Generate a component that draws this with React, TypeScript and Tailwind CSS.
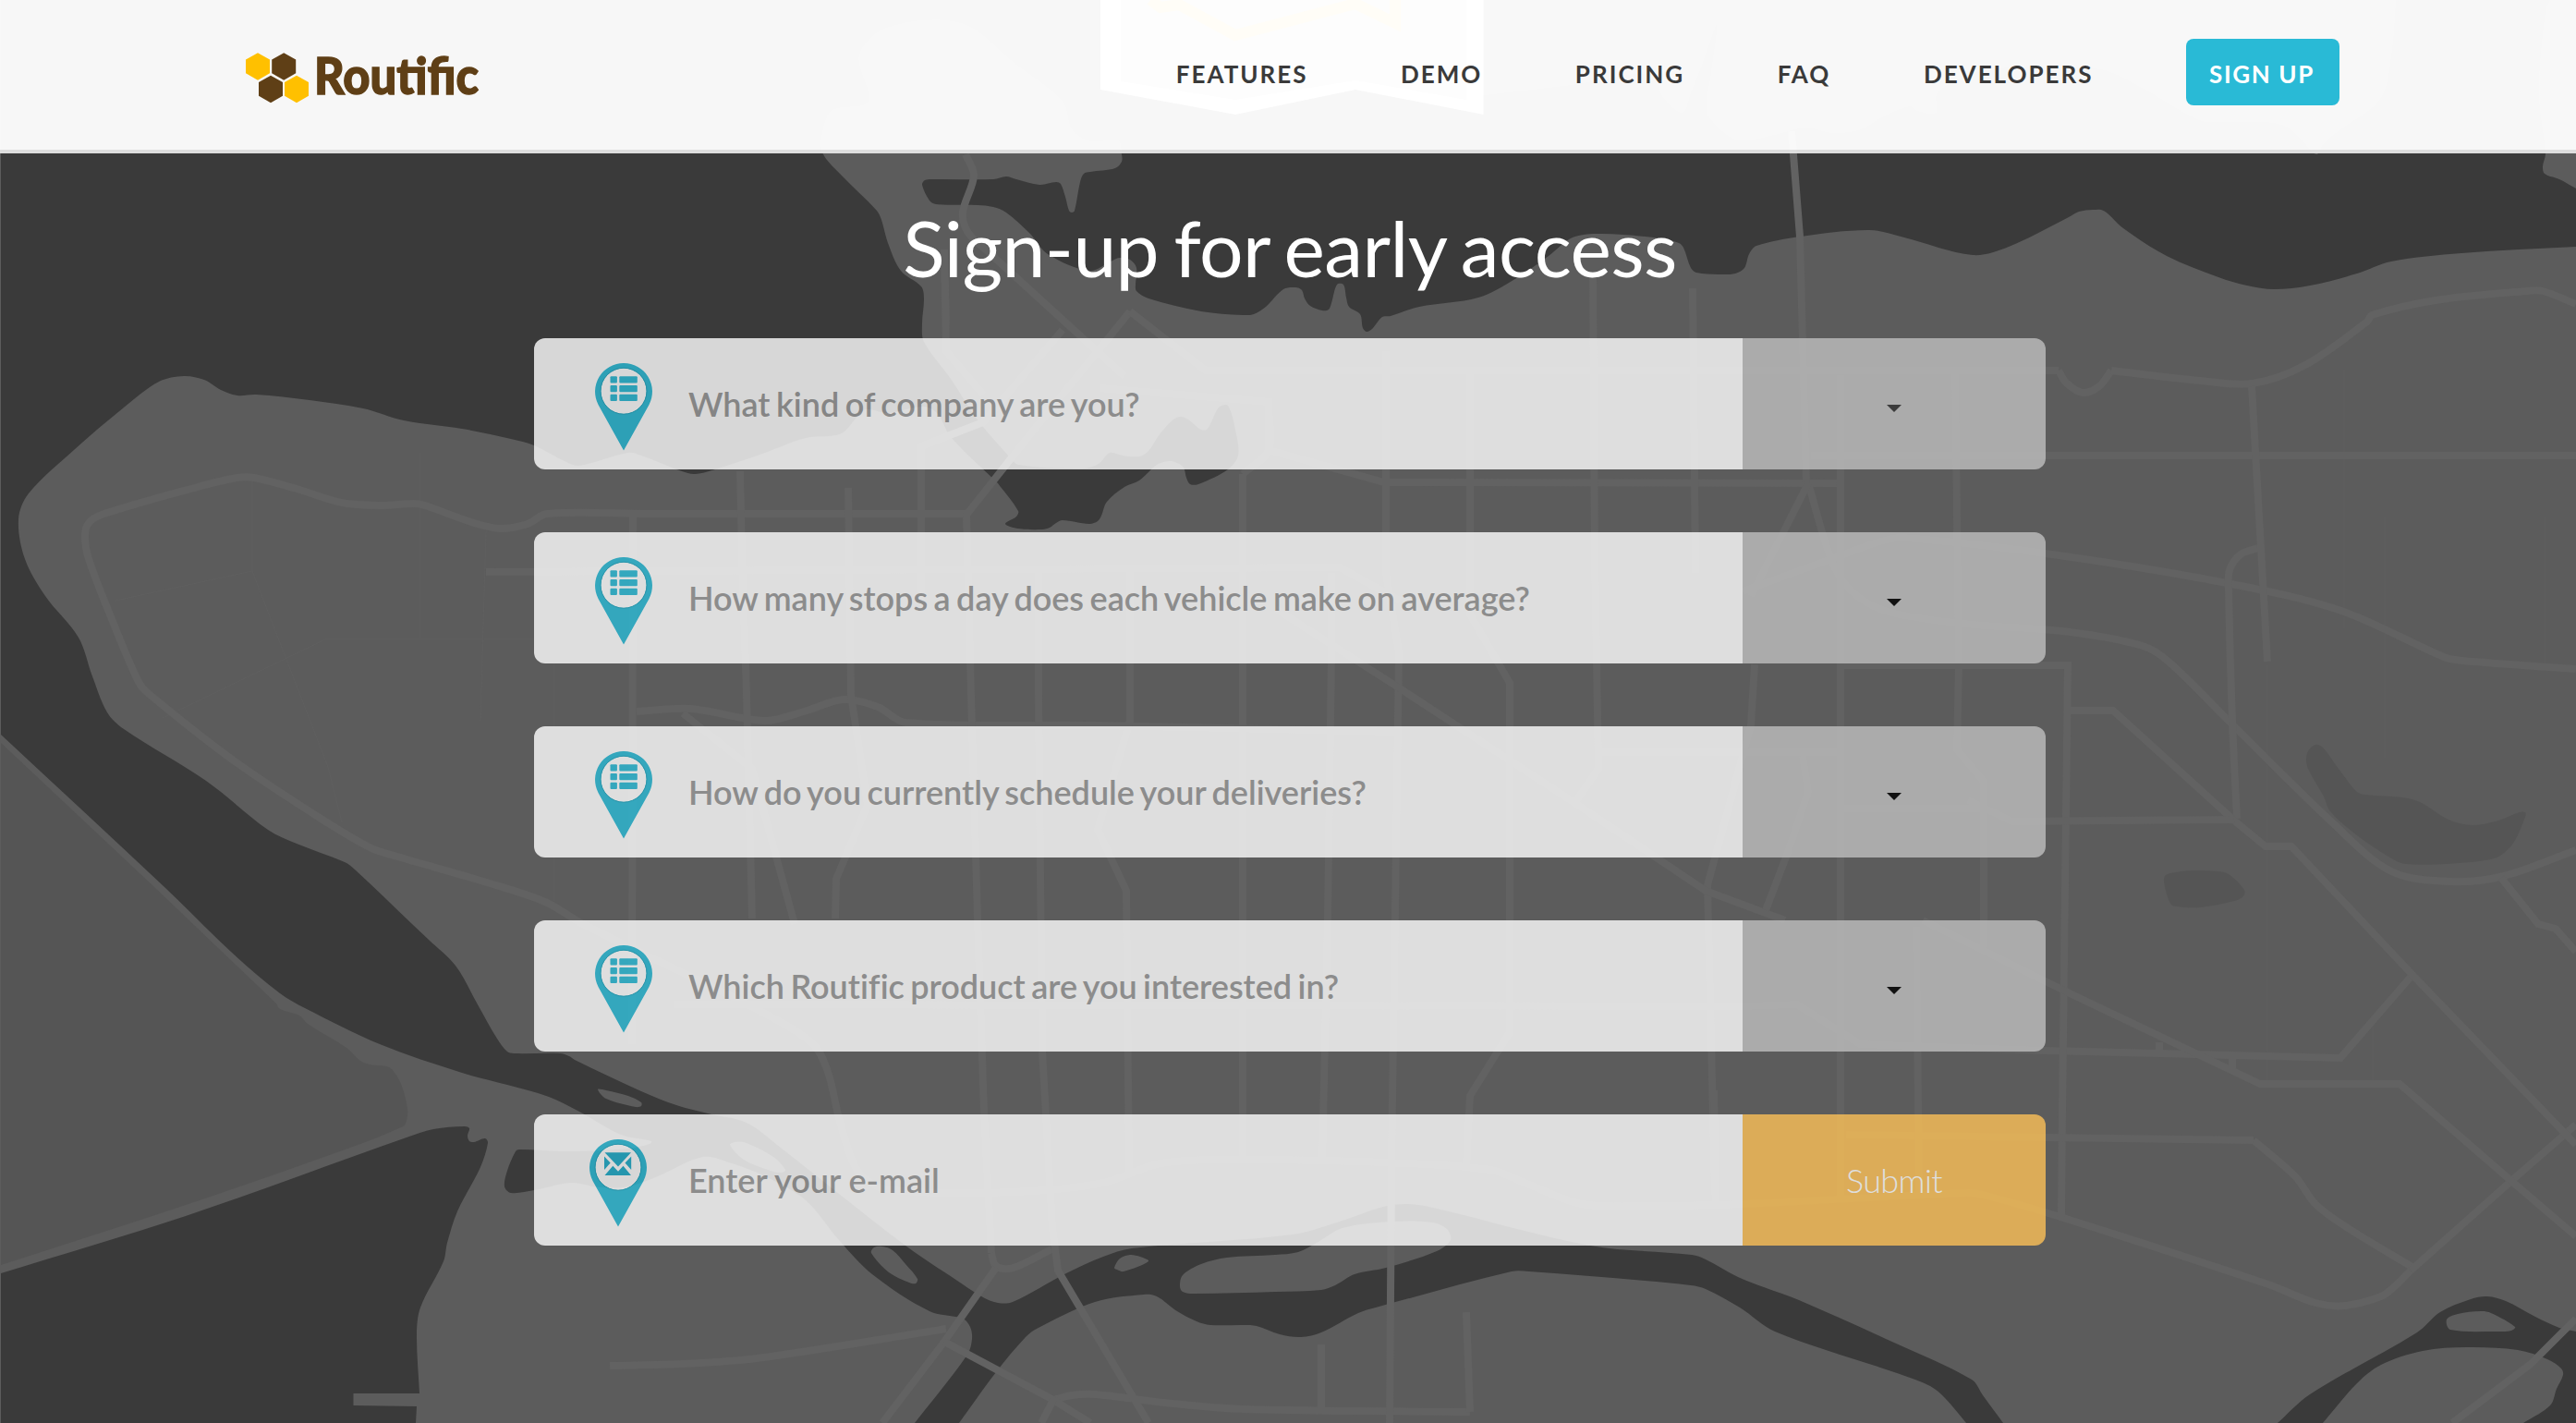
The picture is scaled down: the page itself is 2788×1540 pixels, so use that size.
import React from "react";

type Pt = [number, number];

const parse = (s: string): Pt[] =>
  s
    .trim()
    .split(/\s+/)
    .map((p) => p.split(",").map(Number) as Pt);

// Turns a list of points into a soft curve (Catmull-Rom converted to cubic Béziers).
function smooth(s: string, closed = false): string {
  const p = parse(s);
  const n = p.length;
  const at = (i: number): Pt =>
    closed ? p[(i + n) % n] : p[Math.max(0, Math.min(n - 1, i))];
  const dist = (a: Pt, b: Pt) => Math.hypot(a[0] - b[0], a[1] - b[1]) || 1;
  let d = `M${p[0][0]},${p[0][1]}`;
  const last = closed ? n : n - 1;
  for (let i = 0; i < last; i++) {
    const a = at(i - 1);
    const b = at(i);
    const c = at(i + 1);
    const e = at(i + 2);
    const len = dist(b, c);
    const k1 = (0.33 * len) / (dist(a, b) + len);
    const k2 = (0.33 * len) / (dist(c, e) + len);
    d += `C${(b[0] + (c[0] - a[0]) * k1).toFixed(1)},${(b[1] + (c[1] - a[1]) * k1).toFixed(1)} ${(c[0] - (e[0] - b[0]) * k2).toFixed(1)},${(c[1] - (e[1] - b[1]) * k2).toFixed(1)} ${c[0]},${c[1]}`;
  }
  return closed ? d + "Z" : d;
}

const sharp = (s: string) => "M" + s.trim().split(/\s+/).join("L");

// Continues an existing path instead of starting a new one.
const join = (...parts: string[]) =>
  parts.map((d, i) => (i === 0 ? d : d.replace(/^M/, "L"))).join("") + "Z";

const northShore = smooth(
  "1606,103 1700,92 1787,80 1800,105 1821,122 1830,100 1842,70 1858,27 1852,80 1847,120 1860,138 1876,150 1890,152 1920,146 1955,138 1984,144 2014,140 2040,125 2067,115 2076,120 2095,122 2097,100 2140,78 2200,72 2274,75 2322,97 2381,130 2415,132 2452,132 2475,137 2490,150 2507,167 2515,155 2529,143 2576,107 2588,60 2593,0"
);
const eastHeader = smooth(
  "2760,0 2755,13 2748,100 2755,166 2752,180 2754,188 2770,194 2788,204"
);
const harbour = smooth(
  "2788,267 2664,274 2588,283 2551,296 2500,309 2461,313 2432,309 2401,300 2345,277 2298,247 2281,231 2274,227 2265,227 2250,229 2239,235 2174,267 2135,276 2061,257 2023,249 1949,256 1901,266 1893,275 1888,290 1878,296 1860,297 1836,295 1830,290 1822,268 1817,263 1797,258 1734,253 1702,257 1676,277 1638,303 1600,322 1536,332 1505,342 1496,343 1485,356 1479,359 1475,355 1472,340 1460,332 1457,322 1454,308 1447,308 1441,328 1438,335 1431,336 1418,331 1412,323 1409,314 1402,311 1389,313 1370,332 1357,340 1345,341 1300,337 1243,323 1230,315 1229,308 1230,290 1223,281 1212,279 1204,282 1179,293 1134,275 1115,253 1089,230 1075,224 1058,222 1013,221 1006,217 998,200 1001,195 1010,194 1075,194 1089,191 1100,194 1125,200 1143,197 1148,199 1153,213 1157,228 1160,230 1163,228 1169,197 1173,188 1180,186 1207,182 1214,175 1214,167 1210,152 1180,153 1160,140 1150,110 1100,70 1040,25 960,30 930,60 940,110 900,120 889,150 891,167 911,190 949,228 954,238 961,263 975,293 997,310 1000,323 998,350 1000,370 1029,410 1060,457 1093,495"
);
const falseCreek = smooth(
  "1093,495 1102,503 1172,507 1189,502 1201,490 1215,493 1233,494 1243,488 1255,470 1270,454 1278,451 1286,454 1300,465 1307,464 1319,441 1329,439 1338,470 1340,493 1329,508 1297,524 1288,524 1284,517 1281,506 1274,501 1265,499 1252,503 1233,520 1217,527 1198,543 1192,558 1188,564 1179,567 1150,563 1143,566 1136,571 1128,573 1102,572 1088,567 1100,559 1102,553 1080,523"
);
const kitsToPoint = smooth(
  "1080,523 1029,473 1015,448 1000,440 960,447 937,443 926,453 915,466 905,471 872,474 828,490 774,508 752,513 738,510 694,493 680,490 627,504 613,500 578,482 553,475 500,464 437,455 393,442 335,433 277,427 257,428 239,422 221,411 199,407 172,413 134,441 80,487 31,534 20,562 27,605 49,645 85,690 100,732 116,771 134,789 223,845 290,898 321,913 373,933 384,941 446,1000 464,1017 493,1045 518,1089 538,1124 549,1138 556,1140 606,1140 616,1143 622,1147 694,1181 732,1196 770,1206 808,1215 846,1243 908,1292 980,1348 1042,1390 1064,1404 1080,1410 1096,1409 1154,1378 1194,1360 1225,1351 1399,1336 1450,1322 1497,1306 1524,1303 1551,1307 1721,1348 1831,1358 1846,1363 1881,1382 1909,1393 1947,1407 2050,1453 2134,1493 2146,1510 2168,1540"
);
const southArm = smooth(
  "2128,1540 2105,1513 2089,1500 2056,1487 1921,1441 1883,1415 1846,1395 1830,1391 1780,1386 1655,1376 1636,1376 1489,1415 1470,1421 1430,1442 1408,1447 1385,1444 1360,1435 1346,1434 1310,1434 1295,1430 1274,1419 1252,1403 1238,1401 1185,1409 1122,1438 1110,1447 1078,1485 1038,1540"
);
const westArm = smooth(
  "990,1540 1047,1466 1052,1449 1050,1436 1042,1427 1006,1419 944,1379 908,1342 872,1299 828,1273 792,1259 761,1252 712,1273 680,1284 649,1285 618,1280 578,1288 553,1291 546,1284 549,1267 558,1246 562,1244 616,1246 680,1243 703,1238 705,1235 672,1228 627,1203 594,1187 549,1174 500,1161 411,1130 330,1091 303,1075 250,1030 178,960 1,795"
);

const mainWater = join(
  "M1,0L1300,0",
  northShore,
  eastHeader,
  harbour,
  falseCreek,
  kitsToPoint,
  southArm,
  westArm
);

const seaSouthWest = join(
  smooth(
    "1,1378 201,1316 440,1231 469,1222 503,1219 508,1221 506,1229 508,1235 513,1236 525,1232 528,1237 520,1263 495,1311 484,1345 480,1365 455,1415 451,1444 454,1508"
  ),
  "M382.5,1508L382.5,1521L451,1522L450,1540L1,1540"
);

const channelSouthEast = join(
  smooth(
    "2465,1540 2500,1509 2616,1442 2641,1420 2674,1406 2692,1403 2712,1408 2744,1425 2770,1437 2788,1441"
  ),
  "M2788,1540",
  smooth(
    "2731,1540 2760,1521 2767,1503 2774,1488 2772,1481 2757,1471 2725,1461 2670,1458 2622,1462 2577,1477 2551,1497 2514,1540"
  )
);

const islands = [
  "647,1179 656,1180 680,1186 694,1193 694,1197 688,1198 656,1189",
  "790,1239 796,1236 808,1237 837,1252 850,1266 846,1269 834,1267 805,1255",
  "943,1356 946,1350 955,1349 966,1353 980,1368 993,1384 991,1389 984,1388 962,1377",
  "1206,1372 1212,1362 1223,1358 1234,1360 1243,1365 1216,1376 1209,1374",
  "1277,1392 1280,1380 1300,1368 1328,1361 1380,1358 1405,1355 1425,1345 1453,1329 1506,1322 1550,1323 1566,1330 1570,1342 1555,1354 1500,1372 1466,1379 1445,1391 1430,1396 1380,1398 1292,1400 1280,1398",
  "2648,1428 2660,1422 2685,1419 2696,1421 2722,1436 2718,1440 2706,1441 2652,1439",
];

const greens = [
  "2506,806 2498,813 2496,822 2498,832 2515,862 2522,878 2551,904 2590,930 2604,935 2647,935 2690,931 2706,926 2721,911 2733,884 2733,879 2727,879 2704,888 2676,893 2650,887 2619,868 2600,863 2560,860 2551,857 2531,832 2514,809",
  "2342,954 2344,947 2355,944 2375,942 2400,943 2412,946 2429,963 2428,970 2418,975 2381,982 2356,981 2349,978",
];

const ionaFields = join(
  "M1,804",
  "M167,960",
  smooth(
    "299,1086 303,1092 324,1099 333,1108 375,1134 390,1148 400,1152 418,1154 424,1157 434,1173 441,1200 440,1213 436,1219 379,1242 201,1304 1,1369"
  )
);

const curvedRoads = [
  "1045,556 700,556 592,556 571,567 542,572 513,566 460,547 448,545 411,547 370,544 321,529 275,517 257,517 214,527 110,557 96,566 92,580 96,605 125,680 150,738 160,750 250,821 335,878 400,917 430,927 527,955 590,976 629,999 721,1044 828,1097 880,1130 896,1160 908,1210 922,1255 935,1275 965,1288 1096,1290 1194,1280 1256,1259 1337,1255 1500,1258 1613,1266 1650,1280 1712,1303 1780,1305 1886,1303 2130,1291 2150,1294 2230,1317 2455,1390 2506,1410 2538,1413 2577,1403 2592,1392 2609,1375",
  "2228,401 2236,414 2254,425 2272,418 2285,401",
  "2285,401 2381,412 2438,415 2495,395 2562,348 2567,341 2636,325 2735,315 2752,315 2788,329",
  "1957,523 1985,613 2010,645 2047,663 2126,675 2240,684 2319,699 2347,716 2415,783 2523,889 2588,943 2653,954 2710,948 2788,920",
  "1886,640 1990,602 2035,586 2060,582 2214,599 2410,631 2534,661 2645,711 2665,715 2788,724",
  "2444,593 2425,600 2413,617 2412,640 2416,780 2421,886",
  "689,770 747,767 828,780 870,770 913,757 950,765 980,782 1185,785 1511,792",
  "1073,1356 1077,1369 1086,1373 1100,1371 1138,1352",
  "1045,167 1054,190 1042,230 1048,252 1070,273 1217,407",
  "1140,1515 1160,1510 1185,1509 1260,1518 1346,1525 1591,1528",
  "1024,1438 819,1470 738,1476 660,1478",
  "2439,1234 2484,1273 2506,1303 2538,1327 2612,1372",
  "1373,440 1373,487 1345,513",
];

const straightRoads = [
  "2609,1375 2718,1278 2788,1217",
  "1024,350 1022,277",
  "1022,270 1024,380 1064,427",
  "1150,357 1064,457 997,483 997,650",
  "1223,337 1115,470 1046,557 1051,752 1058,994 1065,1203 1073,1356",
  "1223,337 1305,401 2228,401",
  "1190,420 1373,435 1373,487 1498,522 1988,523",
  "1960,493 2788,493",
  "526,619 1450,614 1515,650",
  "685,557 684,1130",
  "801,510 803,600 808,752 814,994",
  "918,528 921,752 939,871 905,951 904,994",
  "1124,618 1124,752 1128,1137 1139,1329 1145,1375 1243,1540",
  "1223,618 1223,780 1188,898 1219,964 1222,1269",
  "1345,513 1345,1256",
  "1500,380 1500,620 1514,706 1506,1263 1504,1540",
  "1591,400 1591,665 1634,739 1634,1117 1591,1186 1587,1263",
  "1724,300 1726,600 1730,832 1703,871",
  "1832,312 1835,620",
  "1441,620 1441,706 1437,994 1431,1259",
  "1899,719 1895,785 1848,958 1856,1293",
  "1381,659 1515,745 1703,868 1846,964 1932,996",
  "739,772 814,832 860,1000",
  "730,1087 1886,1089 1945,1087 2013,1130 2214,1137 2533,1145 2611,1055",
  "1939,142 1948,256 1955,523",
  "1957,523 1895,645",
  "1992,406 1992,1300",
  "2116,401 2120,720 2118,811 2147,846 2147,1025",
  "2437,418 2454,716",
  "1988,720 2238,720 2232,1203 2231,1317",
  "2240,769 2287,769 2418,888 2452,916 2480,916 2611,1055 2788,1239",
  "2130,866 2178,889 2418,887",
  "2081,996 2240,1075 2446,1173 2597,1173 2718,1278 2788,1338",
  "2707,950 2747,1000 2766,1005 2788,1030",
  "1998,1228 2214,1231 2439,1234",
  "2074,1003 2077,1290",
  "1855,1180 1857,1300",
  "1951,818 1957,857 1934,925 1911,985",
  "1730,814 1988,814",
  "1992,875 2145,875",
  "2337,1128 2337,1142",
  "2416,1145 2416,1156",
  "2788,1427 2738,1477 2654,1540",
  "1078,1372 1022,1452 955,1540",
  "1022,1452 1140,1515 1180,1540",
  "1140,1515 1127,1540",
  "1430,1455 1430,1528",
  "1587,1420 1591,1528",
];

const faintLines = [
  "273,520 273,618 355,830 370,890",
  "455,490 455,692",
  "526,575 520,780",
  "176,777 352,692 578,692",
  "125,650 273,618",
  "600,718 600,975",
  "2537,400 2537,680",
  "2454,720 2454,1170",
  "2568,1110 2568,1170",
  "2581,560 2581,820",
  "2754,560 2754,720",
];

function CityMap() {
  return (
    <svg
      className="absolute inset-0 h-full w-full"
      viewBox="0 0 2788 1540"
      preserveAspectRatio="none"
      aria-hidden="true"
    >
      <rect width="2788" height="1540" fill="#5c5c5c" />
      <path d={mainWater} fill="#3a3a3a" />
      <path d={seaSouthWest} fill="#3a3a3a" />
      <path d={channelSouthEast} fill="#3a3a3a" />
      <path d={ionaFields} fill="#555555" />
      {islands.map((s) => (
        <path key={s} d={smooth(s, true)} fill="#5c5c5c" />
      ))}
      {greens.map((s) => (
        <path key={s} d={smooth(s, true)} fill="#555555" />
      ))}
      <g fill="none" stroke="#5f5f5f" strokeWidth="1">
        {faintLines.map((s) => (
          <path key={s} d={sharp(s)} />
        ))}
      </g>
      <g fill="none" stroke="#626262" strokeWidth="8">
        {curvedRoads.map((s) => (
          <path key={s} d={smooth(s)} />
        ))}
        {straightRoads.map((s) => (
          <path key={s} d={sharp(s)} />
        ))}
      </g>
    </svg>
  );
}

function FoldedMap() {
  return (
    <svg
      className="absolute top-0 left-[1191px] h-[124px] w-[415px]"
      viewBox="0 0 415 124"
      aria-hidden="true"
    >
      <path d="M0 0V97L146 124L276 97L414.500 124V0Z" fill="#ffffff" />
      <path d="M22 0V88L146 108L276 87L396 108V0Z" fill="#fdfdfd" />
      <path
        d="M54 0L65 8L85 5L146 38L276 4L319 25V0"
        fill="none"
        stroke="#fffdf7"
        strokeWidth="12"
      />
    </svg>
  );
}

function Logo() {
  const hex = (x: number, y: number) =>
    `M${x + 13} ${y}L${x + 26} ${y + 7.3}V${y + 22}L${x + 13} ${y + 29.5}L${x} ${y + 22}V${y + 7.3}Z`;
  return (
    <a href="#" className="block">
      <svg className="h-[90px] w-[270px]" viewBox="0 -15 270 90" role="img">
        <path d={hex(0, 2.3)} fill="#ffc000" />
        <path d={hex(28.2, 2.3)} fill="#5f3f16" />
        <path d={hex(14, 26.7)} fill="#5f3f16" />
        <path d={hex(42, 26.7)} fill="#ffc000" />
        <text
          x="74"
          y="47"
          textLength="178"
          lengthAdjust="spacingAndGlyphs"
          className="fill-[#5f3f16] stroke-[#5f3f16] stroke-[1.4px] font-['Lato',sans-serif] text-[56px] font-black"
        >
          Routific
        </text>
      </svg>
    </a>
  );
}

function Pin({ kind }: { kind: "list" | "mail" }) {
  return (
    <svg className="h-[95px] w-[62px] shrink-0" viewBox="0 0 62 95">
      <path
        fillRule="evenodd"
        fill="#2bbad6"
        d="M31 0A30.800 30.800 0 0 1 58.500 45L31 94.500L3.500 45A30.800 30.800 0 0 1 31 0ZM31 5.500A24.700 24.700 0 1 0 31 54.900A24.700 24.700 0 1 0 31 5.500Z"
      />
      <circle cx="31" cy="30.200" r="25" fill="none" stroke="#1fa3bd" strokeWidth="1" />
      {kind === "list" ? (
        <g fill="#2bbad6">
          {[14.3, 24, 33.8].map((y) => (
            <React.Fragment key={y}>
              <rect x="16.500" y={y} width="7.400" height="7.200" rx="1" />
              <rect x="26.300" y={y} width="19.500" height="7.200" rx="1" />
            </React.Fragment>
          ))}
        </g>
      ) : (
        <g fill="#20aecb">
          <path d="M16.500 14.300H45L31 29.500Z" />
          <path d="M16 18.500V33L22.700 25.500Z" />
          <path d="M45.200 18.500V33L38.500 25.500Z" />
          <path d="M16.500 39L25.300 28.700L31 34.700L36.500 28.700L45 39Z" />
        </g>
      )}
    </svg>
  );
}

const links = ["FEATURES", "DEMO", "PRICING", "FAQ", "DEVELOPERS"];

const questions = [
  { text: "What kind of company are you?", caret: "border-t-[#333333]" },
  {
    text: "How many stops a day does each vehicle make on average?",
    caret: "border-t-black",
  },
  {
    text: "How do you currently schedule your deliveries?",
    caret: "border-t-black",
  },
  {
    text: "Which Routific product are you interested in?",
    caret: "border-t-black",
  },
];

export default function App() {
  return (
    <div className="relative h-[1540px] w-[2788px] overflow-hidden bg-[#5c5c5c] font-['Lato',sans-serif]">
      <CityMap />

      <header className="relative h-[166px] border-b-4 border-black/10 bg-[#ffffff]/96">
        <FoldedMap />
        <div className="relative flex h-full items-start pt-[42px] pr-[256px] pl-[266px]">
          <div className="-mt-[2px]">
            <Logo />
          </div>
          <nav className="ml-auto flex h-[72px] items-center gap-[100.5px]">
            {links.map((l) => (
              <a
                key={l}
                href="#"
                className="mt-[4px] text-[26px] leading-8 font-bold tracking-[2px] text-[#3a3a3a]"
              >
                {l}
              </a>
            ))}
            <a
              href="#"
              className="flex h-[72px] w-[166px] items-center justify-center rounded-lg bg-[#29bad6] pt-[4px] pr-[2px] text-[26px] leading-8 font-bold tracking-[1.6px] text-white"
            >
              SIGN UP
            </a>
          </nav>
        </div>
      </header>

      <main className="relative flex flex-col items-center pt-[51px] pl-1">
        <h1 className="text-[84px] leading-[101px] font-normal tracking-[-0.6px] text-white [word-spacing:-4.5px]">
          Sign-up for early access
        </h1>
        <form className="mt-12 flex w-[1636px] flex-col gap-[68px]">
          {questions.map((q) => (
            <div
              key={q.text}
              className="flex h-[142px] overflow-hidden rounded-xl opacity-80"
            >
              <div className="flex w-[1308px] items-start bg-white pt-[27px] pl-[66px]">
                <Pin kind="list" />
                <span className="mt-[22px] ml-[39px] text-[36px] leading-[44px] font-semibold whitespace-nowrap text-[#989898] [font-variant-ligatures:none] [word-spacing:-2.5px]">
                  {q.text}
                </span>
              </div>
              <button
                type="button"
                aria-label="Open options"
                className="flex flex-1 items-center justify-center bg-[#bfbfbf] pt-[10px]"
              >
                <span
                  className={`border-x-8 border-t-8 border-x-transparent ${q.caret}`}
                />
              </button>
            </div>
          ))}
          <div className="flex h-[142px] overflow-hidden rounded-xl opacity-80">
            <div className="flex w-[1308px] items-start bg-white pt-[27px] pl-[60px]">
              <Pin kind="mail" />
              <span className="mt-[22px] ml-[45px] text-[36px] leading-[44px] font-semibold whitespace-nowrap text-[#989898]">
                Enter your e-mail
              </span>
            </div>
            <button
              type="button"
              className="flex-1 bg-[#fcc158] text-[36px] leading-[44px] font-light tracking-[-0.6px] text-white"
            >
              Submit
            </button>
          </div>
        </form>
      </main>
    </div>
  );
}
